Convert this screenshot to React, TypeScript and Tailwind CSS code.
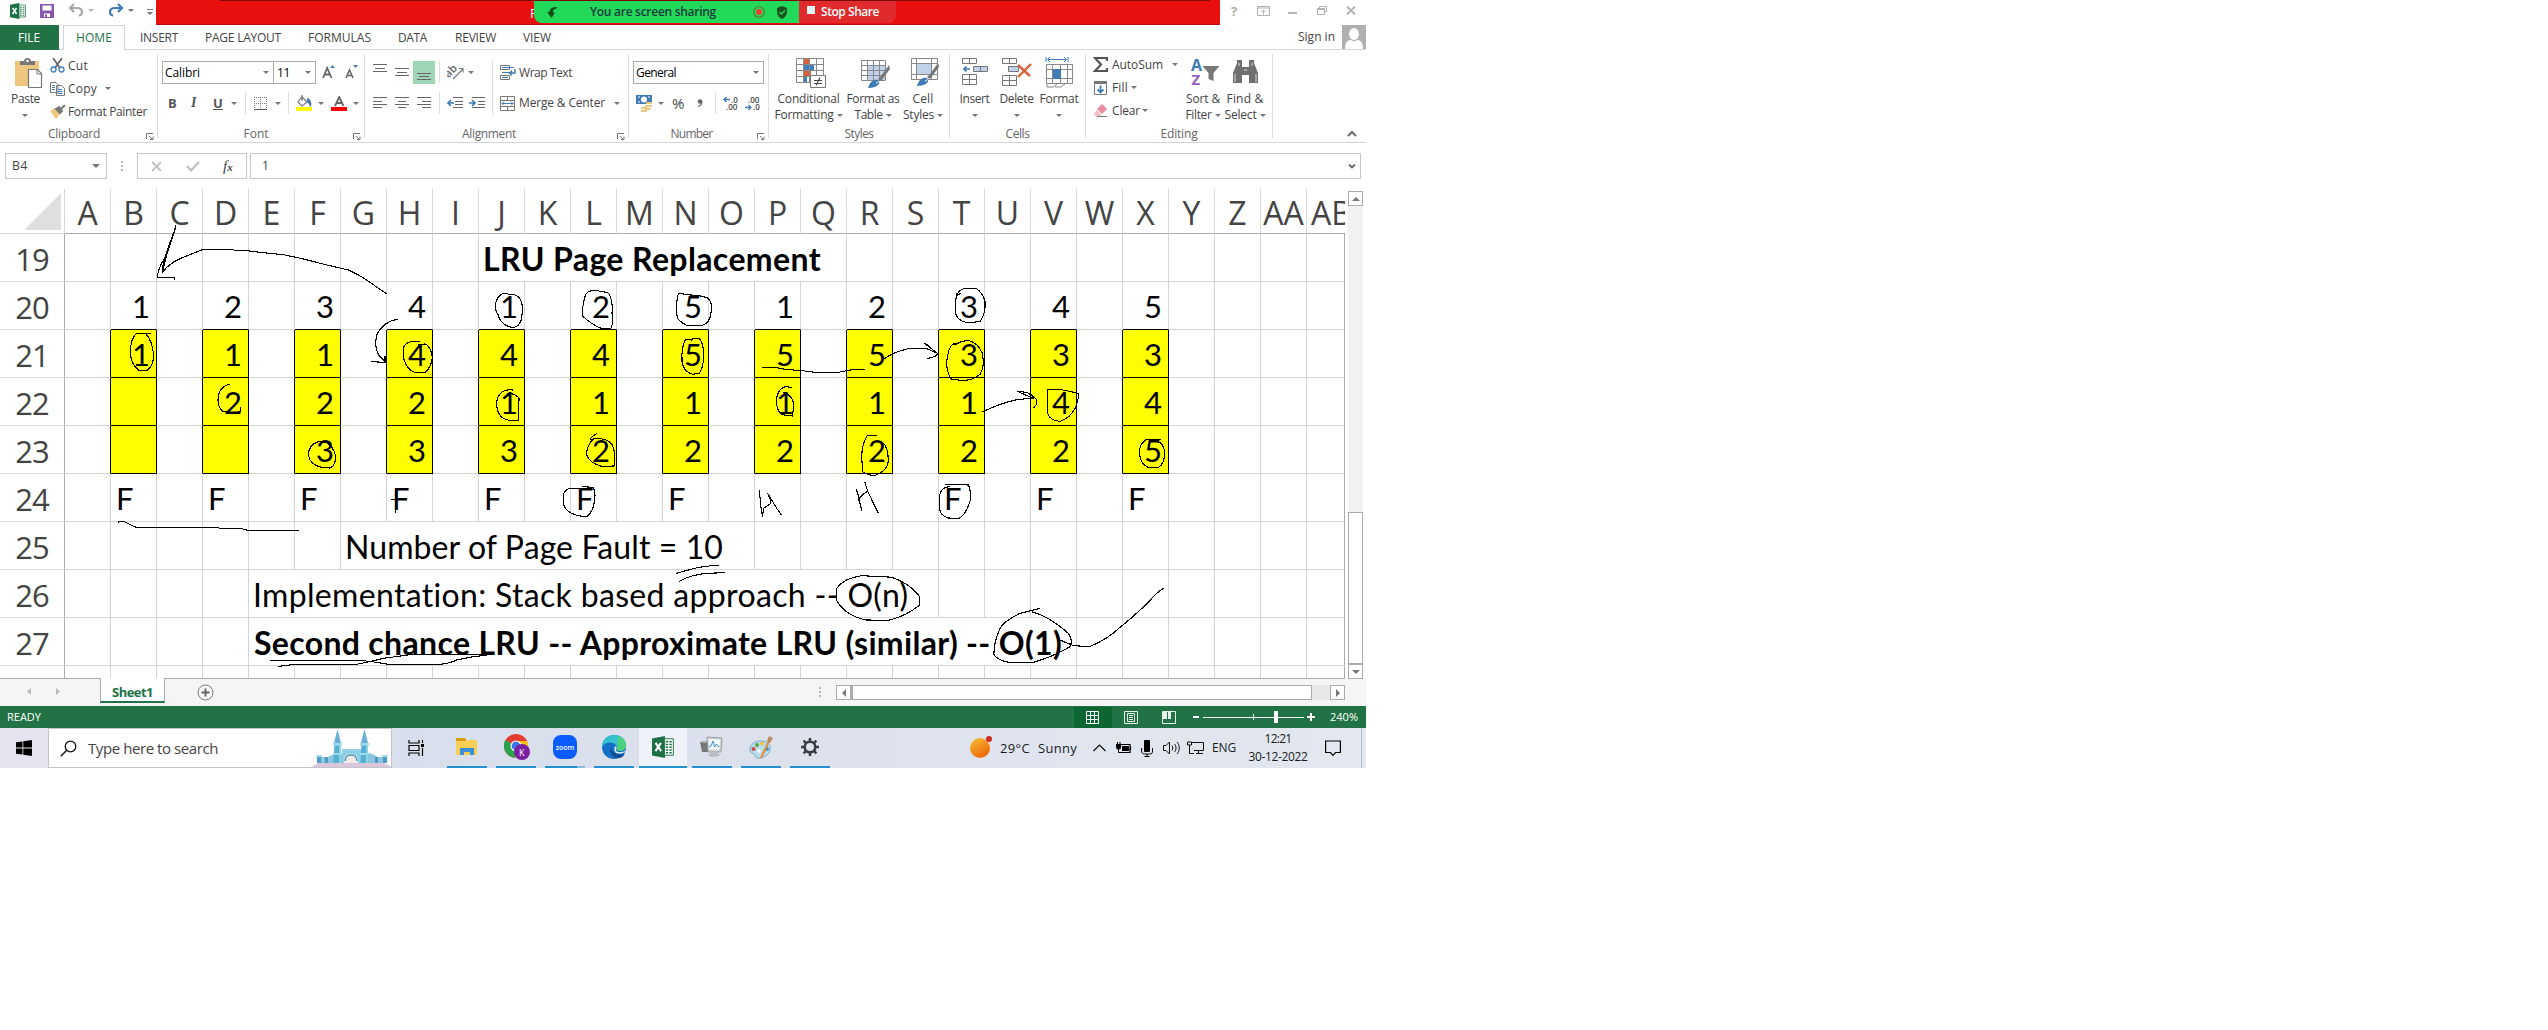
import React, { useLayoutEffect, useRef } from "react";

/* Single-line label whose tracking is adjusted so that the text fills its box. */
function T({ className = "", children }: { className?: string; children: string }) {
  const box = useRef<HTMLSpanElement>(null);
  const text = useRef<HTMLSpanElement>(null);
  useLayoutEffect(() => {
    if (!box.current || !text.current) return;
    text.current.style.letterSpacing = "0px";
    const gap = box.current.clientWidth - text.current.getBoundingClientRect().width;
    text.current.style.letterSpacing = `${gap / children.length}px`;
  }, [children]);
  return (
    <span ref={box} className={`block shrink-0 whitespace-nowrap ${className}`}>
      <span ref={text}>{children}</span>
    </span>
  );
}

function Svg({ w, h, className = "", children }: { w: number; h: number; className?: string; children: React.ReactNode }) {
  return (
    <svg width={w} height={h} viewBox={`0 0 ${w} ${h}`} fill="none" className={`block shrink-0 ${className}`}>
      {children}
    </svg>
  );
}

function Caret({ className = "" }: { className?: string }) {
  return (
    <Svg w={6} h={3} className={className}>
      <path d="M0 0h6L3 3z" fill="#777" />
    </Svg>
  );
}

function Sep({ className = "" }: { className?: string }) {
  return <div className={`w-px shrink-0 bg-[#dcdcdc] ${className}`} />;
}

function ExcelIcon({ size, className = "" }: { size: number; className?: string }) {
  return (
    <svg width={size} height={size} viewBox="0 0 16 16" className={`block shrink-0 ${className}`}>
      <path d="M8 2h7.5v12H8z" fill="#fff" stroke="#217346" strokeWidth=".7" />
      <path d="M10 4.2h1.8M12.6 4.2h1.8M10 6.2h1.8M12.6 6.2h1.8M10 8.2h1.8M12.6 8.2h1.8M10 10.2h1.8M12.6 10.2h1.8M10 12.2h1.8M12.6 12.2h1.8" stroke="#217346" strokeWidth="1" />
      <path d="M0 1.8 9.4 0v16L0 14.2z" fill="#1e7145" />
      <path d="m2.6 5 4 6M6.5 5l-4 6" stroke="#fff" strokeWidth="1.5" />
    </svg>
  );
}

/* ---------- Title bar ---------- */
function TitleBar() {
  return (
    <div className="flex h-[25px] items-start">
      <ExcelIcon size={16} className="ml-[10px] mt-[3px]" />
      <Svg w={14} h={14} className="ml-[14px] mt-1">
        <path d="M0 0h14v14H0z" fill="#8a57b0" />
        <path d="M2.5 1.5h9v5h-9zM4 9.5h6V13H4z" fill="#fff" />
        <path d="M5 10.5h2V13H5z" fill="#8a57b0" />
      </Svg>
      <Svg w={16} h={14} className="ml-[14px] mt-[3px]">
        <path d="M6 1 2 5l4 4M2.500 5H9c3.500 0 5 1.700 5 4 0 1.800-1.200 3.200-3 3.600" stroke="#a9a9a9" strokeWidth="2.200" />
      </Svg>
      <Svg w={6} h={3} className="ml-1 mt-[9px]"><path d="M0 0h6L3 3z" fill="#b5b5b5" /></Svg>
      <Svg w={16} h={14} className="ml-[14px] mt-[3px]">
        <path d="m10 1 4 4-4 4M13.500 5H7C3.500 5 2 6.700 2 9c0 1.800 1.200 3.200 3 3.600" stroke="#3f7cb5" strokeWidth="2.200" />
      </Svg>
      <Caret className="ml-1 mt-[9px]" />
      <Svg w={6} h={6} className="ml-[13px] mt-[9px]"><path d="M0 .5h6" stroke="#777" /><path d="M0 3h6L3 6z" fill="#777" /></Svg>
      <div className="ml-[3px] flex h-[25px] w-[1064px] items-start border-b border-[#b90d0d] bg-[#e90f0f]">
        <div className="h-px w-[64px]" />
        <div className="flex h-6 w-[990px] items-start border-t border-[#7c0808]">
          <span className="ml-[310px] mt-[2px] w-[4px] overflow-hidden text-[13px] leading-[20px] text-white">P</span>
          <div className="flex h-[22px] w-[265px] items-center rounded-bl-lg bg-[#23d959]">
            <Svg w={11} h={11} className="ml-[13px]">
              <path d="M10 0C6 0 2.500 1 2.500 5H0l4.500 6L8 5.500H6C6 3 7.500 1.500 10 1.500z" fill="#12501c" />
            </Svg>
            <T className="ml-[32px] w-[126px] text-[12px] leading-4 font-semibold text-[#123c3c]">You are screen sharing</T>
            <Svg w={12} h={12} className="ml-[37px]">
              <circle cx="6" cy="6" r="5.300" stroke="#5d7a2a" strokeWidth="1.100" />
              <circle cx="6" cy="6" r="3" fill="#ee4035" />
            </Svg>
            <Svg w={12} h={13} className="ml-[11px]">
              <path d="M6 0 1 2v4c0 3 2 5.500 5 7 3-1.500 5-4 5-7V2z" fill="#1b5320" />
              <path d="m3.500 6 2 2L9 4.500" stroke="#23d959" strokeWidth="1.400" />
            </Svg>
          </div>
          <div className="flex h-[22px] w-[97px] items-center rounded-br-lg bg-[#e02a2c]">
            <div className="-mt-[5px] ml-2 size-2 bg-[#dff6f7]" />
            <T className="ml-[6px] w-[58px] text-[12px] leading-4 font-semibold text-white">Stop Share</T>
          </div>
        </div>
      </div>
      <span className="ml-[11px] mt-[1px] w-[8px] text-[13px] leading-[20px] font-bold text-[#adadad]">?</span>
      <Svg w={13} h={10} className="ml-[18px] mt-[6px]">
        <path d="M.5.5h12v9H.5zM.5 2h12M6.500 8.500V4.500M4.500 6l2-2 2 2" stroke="#b0b0b0" />
      </Svg>
      <div className="ml-[18px] mt-3 h-[2px] w-[9px] bg-[#b5b5b5]" />
      <Svg w={10} h={9} className="ml-5 mt-[6px]">
        <path d="M2.500 2.500v-2h7v5h-2M.5 2.500h7v6h-7zM.5 3.500h7" stroke="#b0b0b0" />
      </Svg>
      <Svg w={10} h={9} className="ml-[19px] mt-[6px]"><path d="m1 .5 8 8M9 .5l-8 8" stroke="#b0b0b0" strokeWidth="1.900" /></Svg>
    </div>
  );
}

/* ---------- Ribbon tabs ---------- */
function Tabs() {
  return (
    <div className="flex h-[25px] items-stretch text-[12px] leading-[25px] text-[#444]">
      <div className="flex w-[59px] bg-[#217346] text-white"><T className="ml-[18px] w-[22px]">FILE</T></div>
      <div className="w-1 border-b border-[#d4d4d4]" />
      <div className="flex w-[62px] border border-b-0 border-[#d4d4d4] text-[#217346]"><T className="ml-[12px] -mt-px w-[36px]">HOME</T></div>
      <div className="flex flex-1 border-b border-[#d4d4d4]">
        <T className="ml-[15px] w-[38px]">INSERT</T>
        <T className="ml-[27px] w-[76px]">PAGE LAYOUT</T>
        <T className="ml-[27px] w-[63px]">FORMULAS</T>
        <T className="ml-[27px] w-[29px]">DATA</T>
        <T className="ml-[28px] w-[41px]">REVIEW</T>
        <T className="ml-[27px] w-[28px]">VIEW</T>
        <T className="ml-auto mr-[7px] w-[37px] leading-6">Sign in</T>
        <Svg w={24} h={24}>
          <path d="M0 0h24v24H0z" fill="#b0b0b0" />
          <ellipse cx="12" cy="9" rx="5" ry="6" fill="#fff" />
          <path d="M3 24c0-6 2-9 6-9l3 1.500 3-1.500c4 0 6 3 6 9z" fill="#fff" />
        </Svg>
      </div>
    </div>
  );
}

/* ---------- Ribbon ---------- */
function Group({ className, label, launcher, children }: { className: string; label: React.ReactNode; launcher?: boolean; children: React.ReactNode }) {
  return (
    <div className={`flex h-[92px] shrink-0 flex-col ${className}`}>
      <div className="flex flex-1">
        <div className="flex h-[76px] flex-1">{children}</div>
      </div>
      <div className="flex h-[16px] items-center justify-center text-[12px] leading-4 text-[#666]">
        <div className="flex flex-1" />
        {label}
        <div className="flex flex-1 justify-end">
          {launcher && (
            <Svg w={8} h={7} className="mr-[3px] mt-1">
              <path d="M.5 6V.5H7M3 3l4 4M7 3.500V6.500H4" stroke="#777" />
            </Svg>
          )}
        </div>
      </div>
    </div>
  );
}

function GroupSep() {
  return <Sep className="mt-1 h-[84px]" />;
}

function Clipboard() {
  return (
    <Group className="w-[157px]" launcher label={<T className="-ml-3 -mr-[3px] w-[52px]">Clipboard</T>}>
      <div className="ml-[10px] flex w-[31px] flex-col items-center pt-2">
        <Svg w={30} h={31} className="ml-1">
          <path d="M2 3h24v25H2z" fill="#edc77f" />
          <path d="M7 7V3h4c0-4 7-4 7 0h4v4z" fill="#777" /><circle cx="14.500" cy="3" r="1.300" fill="#fff" />
          <path d="M15.500 11.500h9l4 4V29.500h-13z" fill="#fff" stroke="#777" strokeWidth="1.200" />
          <path d="M24 12v4h4" stroke="#777" />
        </Svg>
        <T className="mt-[1px] w-[29px] leading-[18px]">Paste</T>
        <Caret className="mt-[6px] mr-[2px]" />
      </div>
      <div className="ml-[9px] flex flex-col">
        <div className="mt-[4px] flex h-[23px] items-center">
          <Svg w={15} h={15}>
            <path d="m3 0 7 10M12 0 5 10" stroke="#666" strokeWidth="1.800" />
            <circle cx="3.500" cy="11.500" r="2.500" stroke="#3f7cb5" strokeWidth="1.300" /><circle cx="11.500" cy="11.500" r="2.500" stroke="#3f7cb5" strokeWidth="1.300" />
          </Svg>
          <T className="ml-[3px] w-[20px]">Cut</T>
        </div>
        <div className="flex h-[23px] items-center">
          <Svg w={15} h={14}>
            <path d="M.5.5H6l2 2v8H.500zM6.500 3.500h5l3 3v7h-8z" fill="#fff" stroke="#777" />
            <path d="M2 3.500h3M2 5.500h3M2 7.500h3M8 7.500h4M8 9.500h4.500M8 11.500h4.500" stroke="#3f7cb5" />
          </Svg>
          <T className="ml-[3px] w-[29px]">Copy</T>
          <Caret className="ml-[8px]" />
        </div>
        <div className="flex h-[23px] items-center">
          <Svg w={16} h={14}>
            <path d="m0 6 5-3 5 6-4 5z" fill="#edc77f" />
            <path d="m6 4 3-2 3 4-2 2zM11 4l4-4" stroke="#777" strokeWidth="2" fill="#777" />
          </Svg>
          <T className="ml-[2px] w-[79px]">Format Painter</T>
        </div>
      </div>
    </Group>
  );
}

function FontGroup() {
  return (
    <Group className="w-[206px]" launcher label={<T className="-ml-[10px] w-[25px]">Font</T>}>
      <div className="flex flex-col pl-[4px]">
        <div className="mt-[11px] flex h-[23px]">
          <div className="flex w-[112px] items-center border border-[#ababab] text-black">
            <T className="ml-[2px] w-[35px]">Calibri</T><Caret className="ml-auto mr-1" />
          </div>
          <div className="-ml-px flex w-[43px] items-center border border-[#ababab] text-black">
            <T className="ml-[3px] w-[13px]">11</T><Caret className="ml-auto mr-1" />
          </div>
          <Svg w={14} h={14} className="ml-[6px] mt-[4px]">
            <path d="M1 13 5.200 3 9.500 13M2.600 9.500h5.500" stroke="#666" strokeWidth="1.800" /><path d="M8 3h5L10.500 0z" fill="#3f7cb5" />
          </Svg>
          <Svg w={14} h={14} className="ml-[9px] mt-[4px]">
            <path d="M1 13 4.500 5 8 13M2.300 10.500h4.500" stroke="#666" strokeWidth="1.600" /><path d="M8 0h5L10.500 3z" fill="#3f7cb5" />
          </Svg>
        </div>
        <div className="mt-[8px] flex h-[22px] items-center text-[13px] text-[#555]">
          <span className="ml-[6px] w-[10px] font-bold">B</span>
          <span className="ml-[13px] w-[9px] font-['Liberation_Serif'] text-[14px] font-bold italic">I</span>
          <span className="ml-[13px] w-[10px] font-bold underline">U</span>
          <Caret className="ml-2" />
          <Sep className="ml-[8px] h-[22px]" />
          <Svg w={13} h={13} className="ml-[8px]">
            <path d="M.5 0v12M6.500 0v12M12.500 0v12M0 .5h13M0 6.500h13" stroke="#777" strokeDasharray="1 1" /><path d="M0 12.500h13" stroke="#555" />
          </Svg>
          <Caret className="ml-[8px]" />
          <Sep className="ml-[7px] h-[22px]" />
          <Svg w={16} h={16} className="ml-[7px]">
            <path d="m6 2 5 5-5 4-4-4z" stroke="#777" strokeWidth="1.200" /><path d="M6 6V0" stroke="#777" strokeWidth="1.200" />
            <path d="M11 3c4 1 5 5 4 9-2-1-2-4-4-5z" fill="#3f7cb5" /><path d="M0 12h16v4H0z" fill="#ff0" />
          </Svg>
          <Caret className="ml-[6px]" />
          <Svg w={16} h={15} className="ml-[7px]">
            <path d="M4 10 8.200 1l4.300 9M5.500 7h5.500" stroke="#666" strokeWidth="1.800" /><path d="M0 11h16v4H0z" fill="#f00" />
          </Svg>
          <Caret className="ml-[6px]" />
        </div>
      </div>
    </Group>
  );
}

function Lines({ d, className = "" }: { d: string; className?: string }) {
  return <Svg w={14} h={12} className={className}><path d={d} stroke="#666" /></Svg>;
}

function Alignment() {
  return (
    <Group className="w-[263px]" launcher label={<T className="-ml-[15px] w-[54px]">Alignment</T>}>
      <div className="flex flex-col pl-2">
        <div className="mt-[11px] flex h-[23px] items-start">
          <Lines className="mt-[3px]" d="M0 .5h14M2 4.500h10M0 7.500h14" />
          <Lines className="ml-2 mt-[7px]" d="M0 .5h14M2 4.500h10M0 7.500h14" />
          <div className="ml-[4px] h-[23px] w-[22px] bg-[#9fd5b7] pl-[4px] pt-[12px]"><Lines d="M0 .5h14M2 3.500h10M0 6.500h14" /></div>
          <Sep className="ml-[4px] h-[22px]" />
          <Svg w={17} h={16} className="ml-[7px] mt-[3px]">
            <text x="-2" y="10" fontSize="11" fontWeight="600" fill="#666" transform="rotate(-45 5 8)">ab</text>
            <path d="M6 15 15.500 5.500M12 4.500h4V8.500" stroke="#777" strokeWidth="1.100" />
          </Svg>
          <Caret className="ml-[4px] mt-[10px]" />
        </div>
        <div className="mt-[8px] flex h-[22px] items-center">
          <Lines d="M0 .5h14M0 4.500h9M0 7.500h14M0 10.500h9" />
          <Lines className="ml-2" d="M0 .5h14M3 4.500h8M0 7.500h14M3 10.500h8" />
          <Lines className="ml-2" d="M0 .5h14M5 4.500h9M0 7.500h14M5 10.500h9" />
          <Sep className="ml-2 h-[22px]" />
          <Svg w={16} h={12} className="ml-[7px]">
            <path d="M6 .5h10M8 4.500h8M8 7.500h8M6 10.500h10" stroke="#666" /><path d="M7 6H1M4 3 1 6l3 3" stroke="#3f7cb5" strokeWidth="1.700" />
          </Svg>
          <Svg w={16} h={12} className="ml-[6px]">
            <path d="M3 .5h13M9 4.500h7M9 7.500h7M3 10.500h13" stroke="#666" /><path d="M0 6h6M3 3l3 3-3 3" stroke="#3f7cb5" strokeWidth="1.700" />
          </Svg>
        </div>
      </div>
      <Sep className="ml-[7px] mt-[10px] h-[55px]" />
      <div className="flex flex-col pl-[7px]">
        <div className="mt-[11px] flex h-[23px] items-center">
          <Svg w={16} h={15}>
            <path d="M.5.5h9v4h-9zM.5 10.500h9v4h-9z" stroke="#777" /><path d="M2 2.500h12M2 7.500h8M2 12.500h6" stroke="#3f7cb5" /><path d="M15 4v4h-5M12 5.500 9.500 8l2.500 2.500" stroke="#3f7cb5" strokeWidth="1.400" />
          </Svg>
          <T className="ml-[3px] w-[53px]">Wrap Text</T>
        </div>
        <div className="mt-[8px] flex h-[22px] items-center">
          <Svg w={15} h={15}>
            <path d="M.5.5h14v14H.5zM.5 4.500h14M.5 10.500h14M7.500.5v4M7.500 10.500v4" stroke="#777" /><path d="M2 7.500h11M4 5.500l-2 2 2 2M11 5.500l2 2-2 2" stroke="#3f7cb5" />
          </Svg>
          <T className="ml-[4px] w-[86px]">Merge &amp; Center</T>
          <Caret className="ml-[9px]" />
        </div>
      </div>
    </Group>
  );
}

function NumberGroup() {
  return (
    <Group className="w-[139px]" launcher label={<T className="-ml-[14px] w-[42px]">Number</T>}>
      <div className="flex flex-col pl-[4px]">
        <div className="mt-[11px] flex h-[23px] w-[131px] items-center border border-[#ababab] text-black">
          <T className="ml-[2px] w-[40px]">General</T><Caret className="ml-auto mr-1" />
        </div>
        <div className="mt-[8px] flex h-[22px] items-center">
          <Svg w={17} h={17} className="ml-[3px]">
            <path d="M0 0h16v9H0z" fill="#3f7cb5" /><circle cx="8" cy="4.500" r="3" fill="#fff" /><path d="M2 2h2M12 2h2M2 7h2" stroke="#fff" />
            <path d="M10 8h6M9 11h7M5 13h6M9 14h6M5 16h6" stroke="#edc77f" strokeWidth="2" />
          </Svg>
          <Caret className="ml-[5px]" />
          <span className="ml-[8px] w-[15px] text-[15px]">%</span>
          <Svg w={6} h={8} className="ml-[10px]"><circle cx="3" cy="2.500" r="2.300" fill="#666" /><path d="M5 2.500C5 5 4 6.500 1 7.500" stroke="#666" strokeWidth="1.200" /></Svg>
          <Sep className="ml-3 h-[22px]" />
          <Svg w={16} h={15} className="ml-[7px]">
            <text x="8" y="6.500" fontSize="8" fill="#444" fontWeight="600">.0</text><text x="3" y="14" fontSize="8" fill="#444" fontWeight="600">.00</text><path d="M7 3.500H1M3.500 1 1 3.500 3.500 6" stroke="#3f7cb5" strokeWidth="1.300" />
          </Svg>
          <Svg w={16} h={15} className="ml-[6px]">
            <text x="3" y="6.500" fontSize="8" fill="#444" fontWeight="600">.00</text><text x="8" y="14" fontSize="8" fill="#444" fontWeight="600">.0</text><path d="M0 11.500h6M3.500 9 6 11.500 3.500 14" stroke="#3f7cb5" strokeWidth="1.300" />
          </Svg>
        </div>
      </div>
    </Group>
  );
}

function Brush() {
  return (
    <>
      <path d="M28 5 20 16l-3 3 3 2 9-12z" fill="#777" />
      <path d="M7 28c2-7 6-9 10-8 3 2 1 8-10 8z" fill="#3f7cb5" />
      <path d="M15 23c1.500 0 2.500-1 2-2" stroke="#fff" />
    </>
  );
}

function Big({ className, icon, l1, l2 }: { className: string; icon: React.ReactNode; l1: React.ReactNode; l2?: React.ReactNode }) {
  return (
    <div className={`flex shrink-0 flex-col items-center pt-[7px] ${className}`}>
      {icon}
      <div className="mt-[1px] h-4 leading-4">{l1}</div>
      <div className="flex h-4 items-center justify-center gap-[3px] leading-4">{l2}<Caret /></div>
    </div>
  );
}

function Styles() {
  return (
    <Group className="w-[180px]" label={<T className="w-[29px]">Styles</T>}>
      <Big
        className="ml-[6px] w-[67px]"
        icon={
          <Svg w={31} h={33} className="ml-[3px]">
            <path d="M1.500 1.500h27v24h-27z" fill="#fff" /><path d="M8 2h6v6H8zM8 13h8v6H8z" fill="#d9603b" /><path d="M8 7h11v6H8zM8 19h4v6H8z" fill="#4080bd" />
            <path d="M1.500 1.500h27v24h-27zM8.500 1.500v24M14.500 1.500v24M21.500 1.500v24M1.500 7.500h27M1.500 13.500h27M1.500 19.500h27" stroke="#888" />
            <path d="M15.500 18.500h15v12h-15z" fill="#fff" stroke="#777" /><path d="M19 23.500h8M19 26.500h8M25 20.500l-4 8" stroke="#444" strokeWidth="1.100" />
          </Svg>
        }
        l1={<T className="w-[62px]">Conditional</T>}
        l2={<T className="w-[59px]">Formatting</T>}
      />
      <Big
        className="ml-[5px] w-[52px]"
        icon={
          <Svg w={30} h={33} className="ml-1">
            <path d="M1.500 3.500h24v20h-24z" fill="#fff" /><path d="M8 8h17v15H8z" fill="#bfd2e9" />
            <path d="M1.500 3.500h24v20h-24zM7.500 3.500v20M13.500 3.500v20M19.500 3.500v20M1.500 8.500h24M1.500 13.500h24M1.500 18.500h24" stroke="#888" /><g transform="translate(1 3)"><Brush /></g>
          </Svg>
        }
        l1={<T className="w-[53px]">Format as</T>}
        l2={<T className="w-[28px]">Table</T>}
      />
      <Big
        className="ml-[5px] w-[38px]"
        icon={
          <Svg w={30} h={33} className="ml-[3px]">
            <path d="M1.500 1.500h26v21h-26z" fill="#fff" /><path d="M6 6h16v11H6z" fill="#bfd2e9" />
            <path d="M1.500 1.500h26v21h-26zM6.500 1.500v21M21.500 1.500v21M1.500 6.500h26M1.500 17.500h26" stroke="#888" /><g transform="translate(0 1)"><Brush /></g>
          </Svg>
        }
        l1={<T className="w-[21px]">Cell</T>}
        l2={<T className="w-[31px]">Styles</T>}
      />
    </Group>
  );
}

function Cells() {
  return (
    <Group className="w-[135px]" label={<T className="w-[24px]">Cells</T>}>
      <Big
        className="ml-[9px] w-[31px]"
        icon={
          <Svg w={27} h={33}>
            <path d="M1.500 1.500h14v5h-14zM8.500 1.500v5M1.500 17.500h14v10h-14zM8.500 17.500v10M1.500 22.500h14" stroke="#777" /><path d="M12.500 9.500h14v5h-14z" fill="#bfd2e9" stroke="#777" /><path d="M19.500 9.500v5" stroke="#777" /><path d="M9 12H3M5.500 9.500 3 12l2.500 2.500" stroke="#3f7cb5" strokeWidth="1.700" />
          </Svg>
        }
        l1={<T className="w-[30px]">Insert</T>}
      />
      <Big
        className="ml-[9px] w-[35px]"
        icon={
          <Svg w={31} h={33}>
            <path d="M1.500 1.500h14v5h-14zM8.500 1.500v5M1.500 18.500h14v10h-14zM8.500 18.500v10M1.500 23.500h14" stroke="#777" /><path d="M7.500 9.500h10v5h-10z" fill="#bfd2e9" stroke="#777" /><path d="m17 8 12 11M30 7 17 20" stroke="#d9603b" strokeWidth="2.400" />
          </Svg>
        }
        l1={<T className="w-[34px]">Delete</T>}
      />
      <Big
        className="ml-[5px] w-[40px]"
        icon={
          <Svg w={29} h={33}>
            <path d="M1 0v5M23 0v5M3 2.500h18M5 0 2.500 2.500 5 5M19 0l2.500 2.500L19 5" stroke="#3f7cb5" /><path d="M1.500 7.500h26v19h-26zM7.500 7.500v19M15.500 7.500v19M22.500 7.500v19M1.500 12.500h26M1.500 21.500h26" stroke="#888" /><path d="M8 12h8v10H8z" fill="#3f7cb5" /><path d="M2 27v3h6l4-3M10 30h6l4-3" stroke="#888" />
          </Svg>
        }
        l1={<T className="w-[39px]">Format</T>}
      />
    </Group>
  );
}

function Editing() {
  return (
    <Group className="w-[186px]" label={<T className="w-[37px]">Editing</T>}>
      <div className="ml-[7px] flex w-[92px] flex-col">
        <div className="mt-[3px] flex h-[23px] items-center">
          <Svg w={15} h={15}><path d="M14 4V1H2l6 6.500L2 14h12v-3" stroke="#555" strokeWidth="2.200" /></Svg>
          <T className="ml-[4px] w-[51px]">AutoSum</T><Caret className="ml-[9px]" />
        </div>
        <div className="flex h-[23px] items-center">
          <Svg w={15} h={16}><path d="M1.500 1.500h12v13h-12z" stroke="#777" /><path d="M1 1h13v3H1z" fill="#777" /><path d="M7.500 5.500v7M4.500 9.500l3 3 3-3" stroke="#3f7cb5" strokeWidth="1.800" /></Svg>
          <T className="ml-[4px] w-[16px]">Fill</T><Caret className="ml-[3px]" />
        </div>
        <div className="flex h-[23px] items-center">
          <Svg w={15} h={14}><path d="M9 0 14 5 9 10 4 5z" fill="#ea8a9e" /><path d="m3.500 6 5 5-2 1.500H3L1 10z" fill="#f3bcc7" /><path d="M4 12.500h10" stroke="#777" /></Svg>
          <T className="ml-[4px] w-[28px]">Clear</T><Caret className="ml-[2px]" />
        </div>
      </div>
      <Big
        className="w-[36px]"
        icon={
          <Svg w={31} h={33} className="ml-1">
            <text x="1" y="14" fontSize="16" fontWeight="700" fill="#3f7cb5">A</text><text x="1.500" y="28" fontSize="15" fontWeight="700" fill="#9a5fb8">Z</text><path d="M12.500 9h17l-6 7v8l-5-2v-6z" fill="#777" />
          </Svg>
        }
        l1={<T className="w-[34px]">{"Sort &"}</T>}
        l2={<T className="w-[26px]">Filter</T>}
      />
      <Big
        className="ml-[4px] w-[40px]"
        icon={
          <Svg w={27} h={33}>
            <path d="M1 26V16l4-10V3h5v7h7V3h5v3l4 10v10h-9v-8h-7v8z" fill="#6f6f6f" /><path d="M3 17v8M7 6v3M20 6v3M24 17v8M12 13h3" stroke="#ddd" />
          </Svg>
        }
        l1={<T className="w-[37px]">{"Find &"}</T>}
        l2={<T className="w-[32px]">Select</T>}
      />
    </Group>
  );
}

function Ribbon() {
  return (
    <div className="flex h-[93px] border-b border-[#d4d4d4] text-[12px] leading-4 text-[#444]">
      <Clipboard /><GroupSep />
      <FontGroup /><GroupSep />
      <Alignment /><GroupSep />
      <NumberGroup /><GroupSep />
      <Styles /><GroupSep />
      <Cells /><GroupSep />
      <Editing /><GroupSep />
      <Svg w={10} h={6} className="ml-auto mr-[9px] mt-[81px]"><path d="m1 5 4-4 4 4" stroke="#666" strokeWidth="2" /></Svg>
    </div>
  );
}

/* ---------- Formula bar ---------- */
function FormulaBar() {
  return (
    <div className="flex h-[46px] items-start pt-[10px] text-[12px] text-[#444]">
      <div className="ml-[5px] flex h-[26px] w-[102px] items-center border border-[#c6c6c6]">
        <T className="ml-[6px] w-[16px]">B4</T>
        <Svg w={8} h={4} className="ml-auto mr-[6px]"><path d="M0 0h8L4 4z" fill="#777" /></Svg>
      </div>
      <Svg w={2} h={11} className="ml-[14px] mt-2"><path d="M0 0h2v2H0zM0 4h2v2H0zM0 8h2v2H0z" fill="#b5b5b5" /></Svg>
      <div className="ml-[14px] flex h-[26px] w-[110px] items-center border border-[#c6c6c6]">
        <Svg w={11} h={11} className="ml-[13px]"><path d="m1 1 9 9M10 1l-9 9" stroke="#c0c0c0" strokeWidth="1.800" /></Svg>
        <Svg w={14} h={11} className="ml-[24px]"><path d="m1 5 4 4.500L13 1" stroke="#c0c0c0" strokeWidth="2.200" /></Svg>
        <span className="ml-[23px] font-['Liberation_Serif'] text-[15px] italic text-[#444]">f<span className="text-[11px] font-bold">x</span></span>
      </div>
      <div className="ml-[3px] flex h-[26px] w-[1111px] items-center border border-[#c6c6c6]">
        <span className="ml-[11px]">1</span>
        <Svg w={8} h={5} className="ml-auto mr-1"><path d="m1 .5 3 3 3-3" stroke="#666" strokeWidth="1.800" /></Svg>
      </div>
    </div>
  );
}

/* ---------- Worksheet ---------- */
const COLS = ["A","B","C","D","E","F","G","H","I","J","K","L","M","N","O","P","Q","R","S","T","U","V","W","X","Y","Z","AA"];

const FRAMES: Record<number, string[]> = {
  20: ["1","2","3","4","1","2","5","1","2","3","4","5"],
  21: ["1","1","1","4","4","4","5","5","5","3","3","3"],
  22: ["","2","2","2","1","1","1","1","1","1","4","4"],
  23: ["","","3","3","3","2","2","2","2","2","2","5"],
};
const FAULTS = ["F","F","F","F","F","F","F","","","F","F","F"];

function Cell({ row, col }: { row: number; col: number }) {
  const isFrame = (r: number, c: number) => r >= 21 && r <= 23 && c % 2 === 1 && c < 24;
  const yellow = isFrame(row, col);
  const right = yellow || isFrame(row, col + 1) ? "border-r-black" : "border-r-[#d4d4d4]";
  const bottom = yellow || isFrame(row + 1, col) ? "border-b-black" : "border-b-[#d4d4d4]";
  const k = (col - 1) / 2;
  const data = col % 2 === 1 && col < 24;
  const num = data && FRAMES[row] ? FRAMES[row][k] : "";
  const fault = data && row === 24 ? FAULTS[k] : "";
  return (
    <div className={`h-full w-[46px] shrink-0 border-r border-b ${right} ${bottom} ${yellow ? "bg-[#ffff00]" : ""} ${num ? "pr-[6px] text-right" : "pl-[5px]"}`}>
      {num || fault}
    </div>
  );
}

const TEXT_ROWS: Record<number, { from: number; span: string; count: number; body: React.ReactNode }> = {
  19: { from: 9, count: 8, span: "w-[368px]", body: <T className="ml-[4px] w-[338px] text-[32px] font-bold">LRU Page Replacement</T> },
  25: { from: 6, count: 9, span: "w-[414px]", body: <T className="ml-[4px] w-[378px] text-[32px]">Number of Page Fault = 10</T> },
  26: { from: 4, count: 15, span: "w-[690px]", body: <T className="ml-[4px] w-[656px] text-[32px]">Implementation: Stack based approach -- O(n)</T> },
  27: { from: 4, count: 18, span: "w-[828px]", body: <T className="ml-[5px] w-[808px] text-[32px] font-bold">Second chance LRU -- Approximate LRU (similar) -- O(1)</T> },
};

function SheetRow({ row }: { row: number }) {
  const merged = TEXT_ROWS[row];
  const cells: React.ReactNode[] = [];
  for (let c = 0; c < 27; c++) {
    if (merged && c === merged.from) {
      cells.push(<div key={c} className={`h-full shrink-0 border-r border-b border-[#d4d4d4] ${merged.span}`}>{merged.body}</div>);
      c += merged.count - 1;
    } else cells.push(<Cell key={c} row={row} col={c} />);
  }
  return (
    <div className="flex h-12">
      <div className="w-[65px] shrink-0 border-r border-b border-r-[#ababab] border-b-[#e1e1e1] text-center font-['Open_Sans'] text-[31px] leading-[50px] tracking-[-1px] text-[#444]">{row}</div>
      <div className="flex font-['Lato'] text-[31px] leading-[49px] text-black">{cells}</div>
      <div className="h-full flex-1 border-r border-b border-r-[#ababab] border-b-[#d4d4d4]" />
    </div>
  );
}

function Ink() {
  return (
    <svg width="1366" height="679" viewBox="0 0 1366 679" fill="none" stroke="#000" strokeWidth="3.300" shapeRendering="crispEdges" className="pointer-events-none absolute top-0 left-0">
      <g transform="translate(0 180) scale(.33333)">
        <path d="M527 136 524 150 511 185 494 235Q475 262 472 291L524 294V299M527 145 500 225 487 278 500 262Q520 244 545 234L580 220 607 209H697L712 212H740Q800 220 850 224 920 238 960 250L1045 270Q1090 291 1105 304L1160 341M494 235 488 262V278" />
        <path d="M453 460H410Q392 475 391 515 392 552 415 570L440 572Q460 560 461 525 456 480 438 462" />
        <path d="M690 613Q665 615 655 645 650 680 668 693L700 700 720 695 722 680" />
        <path d="M1193 418Q1150 424 1130 465 1122 500 1136 525L1155 545M1155 527V547L1113 545" />
        <path d="M1260 485H1233Q1210 492 1211 505V535Q1220 570 1245 577H1275Q1296 560 1297 530 1290 495 1275 492L1255 494" />
      </g>
      <g transform="translate(440 180) scale(.33333)">
        <path d="M225 345 190 340Q170 350 167 370 165 395 175 405 178 425 200 437L218 443Q240 440 245 415L248 385Q245 350 225 345" />
        <path d="M505 338 465 331Q437 332 435 350 426 380 428 408 450 430 480 444L512 447Q520 435 516 400 520 360 505 338" />
        <path d="M752 345 715 340Q706 375 712 415 725 430 742 437H785Q808 430 812 405 820 370 805 355 785 346 752 345" />
        <path d="M755 482 758 476H778Q790 490 791 520 792 560 778 580L758 583Q730 575 726 545 724 500 736 480L755 479" />
        <path d="M967 562 1010 563 1040 569 1080 571 1125 577H1195L1230 570 1275 568M1330 538Q1360 517 1390 510L1405 506H1460L1493 520M1453 490 1493 520Q1490 532 1462 535M1456 490 1476 506" />
        <path d="M218 630Q185 625 172 655 165 690 185 712 205 725 236 722L237 655Q225 638 200 642" />
        <path d="M1055 622 1035 620Q1010 630 1010 660 1008 690 1025 704L1058 708 1061 670Q1055 645 1030 636" />
      </g>
      <g transform="translate(900 180) scale(.33333)">
        <path d="M182 340 172 345Q175 330 195 325H228Q250 340 255 365 258 400 240 425L200 428Q170 420 167 400V365L170 340" />
        <path d="M172 492Q180 482 208 482 235 490 247 520 255 560 240 583 220 600 195 601L155 599Q140 580 140 545 145 500 160 492H172" />
        <path d="M247 696Q300 670 350 659L402 654M352 634 380 637Q405 650 410 660L408 675 400 685M352 634 402 656" />
        <path d="M480 628 442 630 443 700Q450 722 480 724 510 715 525 685 535 665 536 640L480 628" />
      </g>
      <g transform="translate(0 430) scale(.33333)">
        <path d="M955 35Q925 45 925 75 930 105 965 112L990 114Q1010 105 1006 75 1000 50 980 38L955 35" />
        <path d="M1186 177V250M1173 208H1222M1186 178H1224" />
        <path d="M355 276 370 274 408 292H650L660 295 725 296 745 301.500H897" />
        <path d="M810 692H1090L1130 697 1165 703H1320Q1350 700 1370 690L1420 680 1460 676M835 709 885 703H1070Q1110 695 1150 685L1230 674H1460" />
      </g>
      <g transform="translate(440 430) scale(.33333)">
        <path d="M450 30Q455 18 470 11M450 28 470 26Q500 25 515 42 528 60 522 108L485 109Q450 100 440 75 440 45 460 27" />
        <path d="M425 170 460 172Q468 190 463 215 460 245 440 260L420 258Q380 250 371 225V190Q380 175 390 176H450" />
        <path d="M958 181 962 225 968 262 970 235 990 222 992 210 982 188 1010 235 1025 256" />
        <path d="M1249 178 1253 190 1266 244 1256 208Q1270 190 1283 184L1275 157M1283 184 1315 250" />
        <path d="M1310 16 1282 17Q1266 40 1265 80L1268 125Q1280 136 1305 136 1340 125 1345 95 1345 50 1328 38" />
        <path d="M709 430 745 420Q790 407 837 406M718 454Q750 435 800 430L855 428" />
        <path d="M1320 440 1265 437Q1210 445 1190 475V512Q1220 560 1280 570L1345 571Q1400 558 1439 525V500Q1410 460 1355 442L1310 438" />
      </g>
      <g transform="translate(900 430) scale(.33333)">
        <path d="M782 28H740Q718 40 718 70 722 105 745 112L775 113Q795 100 794 65 790 40 775 36" />
        <path d="M135 163 205 165Q213 180 211 210 200 250 178 265L145 264Q118 255 119 235V195Q125 170 150 170" />
        <path d="M420 535 360 550Q310 575 300 595 280 640 282 675 300 695 330 697H400Q460 680 510 650 520 630 505 610 450 560 395 545" />
        <path d="M480 630 520 647 568 650Q620 630 660 592 720 545 770 490L791 474" />
      </g>
    </svg>
  );
}

function Arrow({ d }: { d: string }) {
  return <Svg w={8} h={8}><path d={d} fill="#777" /></Svg>;
}

function Worksheet() {
  return (
    <div className="flex h-[490px]">
      <div className="w-[1345px]">
        <div className="flex h-[45px]">
          <div className="flex w-[65px] shrink-0 border-r border-b border-r-[#d4d4d4] border-b-[#d4d4d4]">
            <Svg w={37} h={37} className="ml-[24px] mt-[4px]"><path d="M37 0v37H0z" fill="#dfdfdf" /></Svg>
          </div>
          {COLS.map((c) => (
            <div key={c} className="flex w-[46px] shrink-0 justify-center border-r border-b border-r-[#d9d9d9] border-b-[#ababab] font-['Open_Sans'] text-[32px] leading-[48px] text-[#444]">{c}</div>
          ))}
          <div className="w-[38px] overflow-hidden border-b border-[#ababab] pl-[4px] font-['Open_Sans'] text-[32px] leading-[48px] text-[#444]">AB</div>
        </div>
        {[19, 20, 21, 22, 23, 24, 25, 26, 27].map((r) => <SheetRow key={r} row={r} />)}
        <div className="flex h-[13px] overflow-hidden border-b border-[#ababab]">
          <div className="w-[65px] shrink-0 border-r border-[#ababab]" />
          {COLS.map((c) => <div key={c} className="w-[46px] shrink-0 border-r border-[#d4d4d4]" />)}
          <div className="flex-1 border-r border-[#ababab]" />
        </div>
      </div>
      <div className="ml-[3px] mt-[2px] flex w-[15px] flex-col">
        <div className="flex h-[15px] items-center justify-center border border-[#ababab]"><Arrow d="M0 6h8L4 2z" /></div>
        <div className="h-[306px] bg-[#f2f2f2]" />
        <div className="h-[152px] border border-[#ababab] bg-white" />
        <div className="flex h-[15px] items-center justify-center border border-[#ababab]"><Arrow d="M0 2h8L4 6z" /></div>
      </div>
    </div>
  );
}

function SheetTabs() {
  return (
    <div className="flex h-[27px] items-start bg-[#f5f5f5]">
      <Svg w={4} h={7} className="ml-[27px] mt-[9px]"><path d="M4 0v7L0 3.500z" fill="#bbb" /></Svg>
      <Svg w={4} h={7} className="ml-[25px] mt-[9px]"><path d="M0 0v7l4-3.500z" fill="#bbb" /></Svg>
      <div className="-mt-px ml-10 flex h-[25px] w-[65px] border-x border-b-2 border-x-[#ababab] border-b-[#217346] bg-white">
        <T className="ml-[11px] mt-[3px] w-[41px] text-[13px] leading-[22px] font-bold text-[#217346]">Sheet1</T>
      </div>
      <Svg w={17} h={17} className="ml-[32px] mt-[5px]"><circle cx="8.500" cy="8.500" r="7.500" stroke="#777" /><path d="M8.500 4.500v8M4.500 8.500h8" stroke="#666" strokeWidth="2" /></Svg>
      <Svg w={2} h={11} className="ml-[605px] mt-2"><path d="M0 0h2v2H0zM0 4h2v2H0zM0 8h2v2H0z" fill="#b5b5b5" /></Svg>
      <div className="ml-[15px] mt-[6px] flex h-[15px] w-[509px] bg-[#e8e8e8]">
        <div className="flex w-[15px] items-center justify-center border border-[#ababab] bg-white"><Arrow d="M6 0v8L2 4z" /></div>
        <div className="w-[461px] border border-l-2 border-[#ababab] bg-white" />
        <div className="ml-auto flex w-[15px] items-center justify-center border border-[#ababab] bg-white"><Arrow d="M2 0v8l4-4z" /></div>
      </div>
    </div>
  );
}

function StatusBar() {
  return (
    <div className="flex h-[22px] items-center bg-[#217346] text-[11px] leading-[22px] text-white">
      <T className="ml-[7px] w-[34px]">READY</T>
      <div className="ml-[1033px] mt-[1px] flex h-[21px] w-[38px] items-center justify-center bg-[#0b6631]">
        <Svg w={13} h={13} className="mr-px"><path d="M.5.5h12v12H.5zM4.500.5v12M8.500.5v12M.5 4.500h12M.5 8.500h12" stroke="#fff" /></Svg>
      </div>
      <Svg w={14} h={13} className="ml-3"><path d="M.5.5h13v12H.5zM3.500 2.500h7v8h-7zM5 4.500h4M5 6.500h4M5 8.500h4" stroke="#e4f0e9" /></Svg>
      <Svg w={14} h={13} className="ml-6"><path d="M.5.5h13v12H.5z" stroke="#e4f0e9" /><path d="M1 1h4v7H1zM6 1h3v7H6z" fill="#e4f0e9" /></Svg>
      <div className="ml-[17px] h-[2px] w-[6px] bg-white" />
      <Svg w={101} h={12} className="ml-[4px]"><path d="M0 6.500h101M50.500 3v6" stroke="#fff" /><path d="M71 0h4v12h-4z" fill="#fff" /></Svg>
      <Svg w={8} h={8} className="ml-[3px]"><path d="M4 0v8M0 4h8" stroke="#fff" strokeWidth="2" /></Svg>
      <T className="ml-[15px] w-[28px]">240%</T>
    </div>
  );
}

/* ---------- Windows taskbar ---------- */
function Castle() {
  return (
    <Svg w={79} h={38}>
      <path d="M0 38c5-5 14-7 24-5 12-3 22-3 32 0 10-1 17 0 23 5z" fill="#d9c6dc" />
      <path d="M6 28h10l8-4h34l8 4h8v6H6z" fill="#8cc4de" />
      <path d="M30 20h20v14H30z" fill="#8fd0e8" />
      <path d="M32 34v-3c0-8 14-8 14 0v3z" fill="#f1ece9" /><path d="M33 32c0-8 12-8 12 0" stroke="#4a8fb5" strokeWidth="1.500" />
      <path d="M22.500 14h6l1 20h-8zM49.500 14h6l1 20h-8z" fill="#55b0d4" />
      <path d="M27 14h1.500l1 20H27zM54 14h1.500l1 20H54z" fill="#8ad4e6" />
      <path d="m25.500 0 3.500 14h-7zM52.500 0 56 14h-7z" fill="#6aaeda" />
      <path d="M21 14h9v2.500h-9zM48 14h9v2.500h-9zM21 24h9v2h-9zM48 24h9v2h-9z" fill="#9fdcec" />
      <path d="M5 27h4v7H5zM13 28h3v6h-3zM63 28h3v6h-3zM71 27h4v7h-4z" fill="#4a9cc6" />
      <path d="M4 26h6v2H4zM70 26h6v2h-6z" fill="#a9dcea" />
    </Svg>
  );
}

function Task({ className = "w-10", bar, children }: { className?: string; bar?: React.ReactNode; children: React.ReactNode }) {
  return (
    <div className={`flex h-10 shrink-0 flex-col ${className}`}>
      <div className="flex h-[38px] items-center justify-center">{children}</div>
      {bar ?? <div className="h-[2px] bg-[#2590d0]" />}
    </div>
  );
}

function Taskbar() {
  return (
    <div className="flex h-10 items-center bg-gradient-to-r from-[#e5e3ee] via-[#d8deeb] via-30% to-[#e3e7ef] text-[#1b1b1b]">
      <Svg w={16} h={16} className="ml-4"><path d="m0 2.300 6.500-.9v6.200H0zM7.300 1.300 16 0v7.600H7.300zM0 8.400h6.500v6.200L0 13.700zM7.300 8.400H16V16l-8.700-1.300z" fill="#000" /></Svg>
      <div className="ml-4 flex h-10 w-[344px] items-center border border-[#c4c4c8] bg-white">
        <Svg w={17} h={17} className="ml-[11px]"><circle cx="10.500" cy="6.500" r="5.300" stroke="#111" strokeWidth="1.300" /><path d="M6.500 10.500.8 16.200" stroke="#111" strokeWidth="1.400" /></Svg>
        <T className="ml-[11px] w-[130px] text-[15px] leading-5 text-[#444]">Type here to search</T>
        <div className="ml-auto"><Castle /></div>
      </div>
      <Svg w={17} h={16} className="ml-4"><path d="M1 0v3h10V0M1 5.500h10v5H1zM1 16v-3h10v3M14.500 0v3M14.500 8v8" stroke="#000" strokeWidth="1.200" /><path d="M13 4h3v3h-3z" fill="#000" /></Svg>
      <Task className="ml-[22px] w-10">
        <Svg w={22} h={20}><path d="M0 1h9l1 2h11v15H0z" fill="#f9cf55" /><path d="M0 1h9l1 2v1H0z" fill="#dc9a10" /><path d="M4 18v-7h14v7h-4v-3H8v3z" fill="#3b8fd5" /></Svg>
      </Task>
      <Task className="ml-[9px] w-10">
        <Svg w={26} h={26} className="ml-[2px]">
          <circle cx="12" cy="12" r="12" fill="#e33b2e" /><path d="M12 12 1.600 6A12 12 0 0 0 11 24z" fill="#2ba24c" /><path d="M12 12 11 24A12 12 0 0 0 23 7H12z" fill="#fbc116" />
          <circle cx="12" cy="12" r="5.500" fill="#fff" /><circle cx="12" cy="12" r="4.400" fill="#3b78e7" />
          <circle cx="18" cy="18" r="8" fill="#7b1fa2" /><text x="15" y="21.500" fontSize="9" fill="#fff">K</text>
        </Svg>
      </Task>
      <Task className="ml-[9px] w-10" bar={<div className="flex h-[2px]"><div className="w-8 bg-[#2590d0]" /><div className="w-2 bg-[#83bde0]" /></div>}>
        <div className="flex size-6 items-center justify-center rounded-[8px] bg-[#0b5cff] text-[7px] leading-none font-semibold text-white">zoom</div>
      </Task>
      <Task className="ml-[9px] w-10">
        <Svg w={24} h={24}>
          <circle cx="12" cy="12" r="12" fill="#1470c4" /><path d="M0 12C0 4 6 0 12 0c8 0 12 5 12 10 0 4-3 6-6 6-3-.5-4-1.500-3-3 0-6-11-8-15-1z" fill="#35c1d0" />
          <path d="M16 1c5 1.500 8 5 8 9.500 0 4-3 5.500-6 5.500-2 0-3.500-1-3-2z" fill="#4bd07c" /><path d="M9 12c-2 5 1 11 8 11 3-.5 5-2 6-5-4 3-13 2-14-6z" fill="#0d4a92" /><path d="M15 13c-2 2-1 4.500 4 4 3 0 4-1 5-2-1 3-5 4-8 3.500C12 18 12 14 13 11z" fill="#dbe6f2" />
        </Svg>
      </Task>
      <Task className="ml-[5px] w-12 bg-[#eff2f8]"><ExcelIcon size={22} /></Task>
      <Task className="ml-[5px] w-10">
        <Svg w={24} h={22}>
          <path d="M0 6h8v10H2z" fill="#777" /><path d="M2 5h7v2H2z" fill="#aaa" /><path d="m7 1 15 1-1 14H8z" fill="#d0d2d4" stroke="#8b8f93" strokeWidth=".8" /><path d="m8.500 3 12 .5-1 10H9z" fill="#f2f9fd" /><path d="m9 11 2-1 2-5 1.500 6 2-3 2 3 1-1" stroke="#3a94cf" /><path d="M11 17h7l2 3-9 1-3-2z" fill="#b9bcc0" />
        </Svg>
      </Task>
      <Task className="ml-[9px] w-10">
        <Svg w={24} h={23}>
          <path d="M1 15C0 8 7 4 14 5c6 1 8 5 7 9-1 5-7 9-13 8-2-.5-1-3-3-4-1.500-.5-3.500-1-4-3z" fill="#b9dcef" stroke="#6c9fbd" strokeWidth=".8" />
          <circle cx="4.500" cy="13" r="2" fill="#d9463a" /><circle cx="8" cy="9" r="2" fill="#55a845" /><circle cx="13" cy="7.500" r="1.900" fill="#eec13b" /><circle cx="18" cy="13" r="2" fill="#4590c7" /><circle cx="10" cy="15" r="1.800" fill="#fff" />
          <path d="m12 22 8-17" stroke="#e08a2e" strokeWidth="2" /><path d="m18 5 2-5 4 2-3 5z" fill="#b98a5a" />
        </Svg>
      </Task>
      <Task className="ml-[9px] w-10">
        <Svg w={18} h={18}>
          <circle cx="9" cy="9" r="5.300" stroke="#3a3d42" strokeWidth="2.600" />
          <path d="M9 0v3M9 15v3M0 9h3M15 9h3M2.600 2.600l2.200 2.200M13.200 13.200l2.200 2.200M15.400 2.600l-2.200 2.200M4.800 13.200l-2.200 2.200" stroke="#3a3d42" strokeWidth="2.600" />
        </Svg>
      </Task>
      <svg width="23" height="24" viewBox="0 0 23 24" className="mb-[2px] ml-[140px] block shrink-0">
        <defs><linearGradient id="sun" x1="0" y1="0" x2=".6" y2="1"><stop stopColor="#f6c233" /><stop offset="1" stopColor="#f0660d" /></linearGradient></defs>
        <circle cx="10" cy="13" r="10" fill="url(#sun)" /><circle cx="19" cy="4" r="3" fill="#cf2a1f" />
      </svg>
      <T className="ml-[7px] mt-[2px] w-[30px] text-[13px]">29°C</T>
      <T className="ml-2 mt-[2px] w-[39px] text-[13px]">Sunny</T>
      <Svg w={13} h={8} className="ml-4"><path d="m.5 7 6-6 6 6" stroke="#111" strokeWidth="1.200" /></Svg>
      <Svg w={17} h={12} className="ml-[9px]"><path d="M5 2.500h10v8H5M15.500 4.500v4" stroke="#000" strokeWidth="1.200" /><path d="M7 4h7v5H7zM1 2h5v3a2.500 2.500 0 0 1-5 0z" fill="#000" /><path d="M2.500 0v3M5 0v3M3.500 7v3.500H6" stroke="#000" /></Svg>
      <Svg w={12} h={17} className="ml-[9px]"><rect x="3" width="6" height="12" rx="1" fill="#000" /><path d="M.6 8v3c0 2 1 3 3 3h5c2 0 3-1 3-3V8M6 14v3M3.500 16.500h5" stroke="#000" /></Svg>
      <Svg w={17} h={14} className="ml-[10px]"><path d="M.5 4.500H3L6.500 1v12L3 9.500H.5zM9 4.500c1 1.500 1 3.500 0 5M11.500 3c2 2 2 6 0 8M14 1c3 3 3 9 0 12" stroke="#111" /></Svg>
      <Svg w={17} h={14} className="ml-[7px]"><path d="M4.500 1.500h12v8H7M9 12.500h7M11.500 9.500v3M.5 1h4v3h-4zM2.500 4v8.500H7" stroke="#111" /></Svg>
      <T className="ml-[8px] w-[24px] text-[12px]">ENG</T>
      <div className="ml-[12px] flex w-[60px] flex-col items-center text-[12px] leading-[18px]">
        <T className="w-[27px]">12:21</T>
        <T className="w-[59px]">30-12-2022</T>
      </div>
      <Svg w={16} h={17} className="ml-[17px]"><path d="M.6 1h14.800v11.500H10.500L8 15.300 5.500 12.500H.6z" stroke="#000" strokeWidth="1.200" /></Svg>
      <div className="ml-[20px] h-10 w-px bg-[#b4bac4]" />
    </div>
  );
}

export default function App() {
  return (
    <div className="min-h-[1030px] bg-white">
      <div className="relative flex h-[768px] w-[1366px] flex-col overflow-hidden bg-white font-['Open_Sans','Noto_Sans',sans-serif]">
        <TitleBar />
        <Tabs />
        <Ribbon />
        <FormulaBar />
        <Worksheet />
        <SheetTabs />
        <StatusBar />
        <Taskbar />
        <Ink />
      </div>
    </div>
  );
}
